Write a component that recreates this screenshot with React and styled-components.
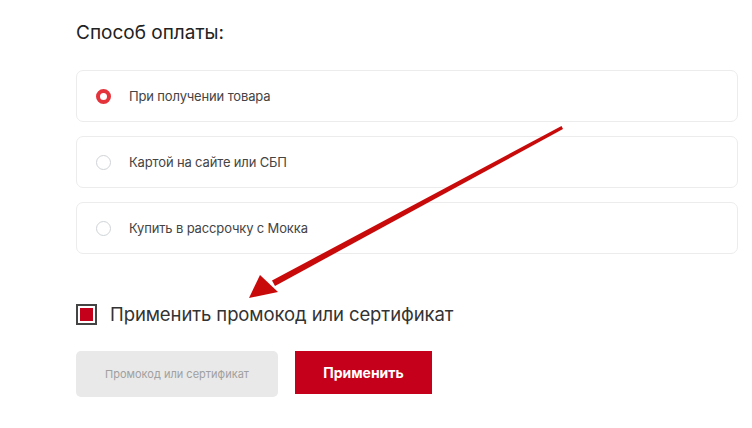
import React from "react";
import styled, { createGlobalStyle } from "styled-components";

const Global = createGlobalStyle`
  html, body { margin: 0; padding: 0; background: #fff; }
  body { font-family: "Inter", "Noto Sans", sans-serif; }
  * { box-sizing: border-box; }
`;

const Page = styled.div`
  position: relative;
  width: 752px;
  height: 428px;
  padding: 22px 14px 0 76px;
`;

const Title = styled.h2`
  margin: 0;
  font-size: 19px;
  font-weight: 400;
  color: #222;
  line-height: 22px;
`;

const Options = styled.div`
  display: flex;
  flex-direction: column;
  gap: 14px;
  margin-top: 26px;
`;

const Option = styled.label`
  display: flex;
  align-items: center;
  height: 52px;
  border: 1px solid #ececec;
  border-radius: 7px;
  padding-left: 19px;
  gap: 18px;
  cursor: pointer;
`;

const Radio = styled.span`
  width: 15px;
  height: 15px;
  border-radius: 50%;
  border: ${(p) => (p.$checked ? "4px solid #e4333a" : "1.5px solid #cfd3d6")};
  background: #fff;
  flex: none;
`;

const OptionText = styled.span`
  font-size: 13px;
  color: #444;
  letter-spacing: -0.15px;
`;

const PromoToggle = styled.div`
  display: flex;
  align-items: center;
  gap: 13px;
  margin-top: 49px;
`;

const CheckBox = styled.span`
  width: 21px;
  height: 21px;
  border: 2px solid #444;
  padding: 2px;
  background: #fff;
  flex: none;
  &::after {
    content: "";
    display: block;
    width: 100%;
    height: 100%;
    background: #c5001a;
  }
`;

const PromoLabel = styled.span`
  font-size: 18.5px;
  color: #333;
  letter-spacing: -0.1px;
`;

const PromoRow = styled.div`
  display: flex;
  gap: 17px;
  margin-top: 26px;
`;

const Input = styled.input`
  width: 202px;
  height: 46px;
  border: none;
  border-radius: 5px;
  background: #e9e9e9;
  text-align: center;
  font-family: inherit;
  font-size: 11px;
  color: #333;
  outline: none;
  &::placeholder { color: #a0a0a0; }
`;

const Button = styled.button`
  width: 137px;
  height: 43px;
  border: none;
  background: #c5001a;
  color: #fff;
  font-family: inherit;
  font-size: 14px;
  font-weight: 700;
  cursor: pointer;
`;

const Annotation = styled.svg`
  position: absolute;
  left: 0;
  top: 0;
  pointer-events: none;
`;

const options = [
  { label: "При получении товара", checked: true },
  { label: "Картой на сайте или СБП", checked: false },
  { label: "Купить в рассрочку с Мокка", checked: false },
];

export default function App() {
  return (
    <>
      <Global />
      <Page>
        <Title>Способ оплаты:</Title>
        <Options>
          {options.map((o) => (
            <Option key={o.label}>
              <Radio $checked={o.checked} />
              <OptionText>{o.label}</OptionText>
            </Option>
          ))}
        </Options>
        <PromoToggle>
          <CheckBox />
          <PromoLabel>Применить промокод или сертификат</PromoLabel>
        </PromoToggle>
        <PromoRow>
          <Input placeholder="Промокод или сертификат" />
          <Button>Применить</Button>
        </PromoRow>
        <Annotation width="752" height="428" viewBox="0 0 752 428">
          <polygon
            points="561.5,126 563,129 275,286 272,280.5"
            fill="#c80a0a"
          />
          <polygon points="249,298 260,275 278,292" fill="#c80a0a" />
        </Annotation>
      </Page>
    </>
  );
}
